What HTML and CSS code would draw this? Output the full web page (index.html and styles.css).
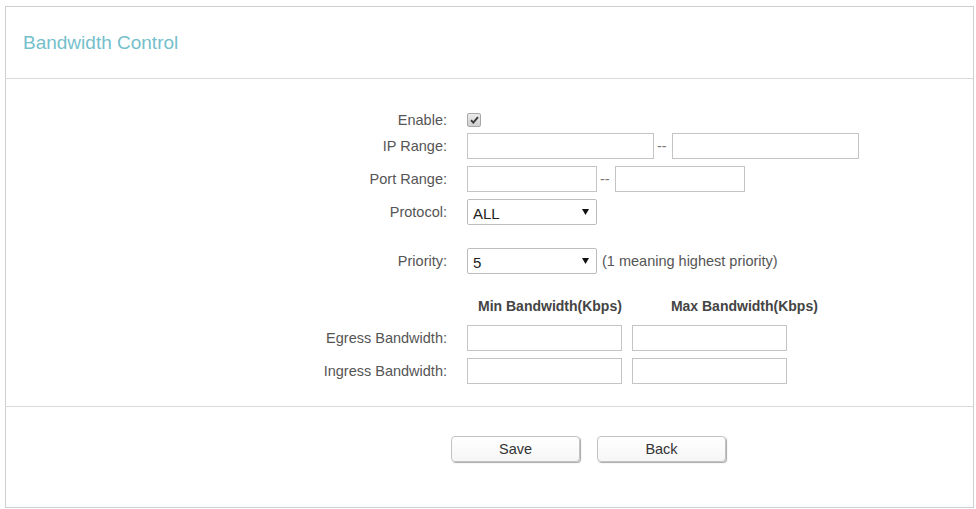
FILE: index.html
```html
<!DOCTYPE html>
<html lang="en">
<head>
    <meta charset="UTF-8">
    <meta name="viewport" content="width=device-width, initial-scale=1.0">
    <title>Bandwidth Control</title>
    <link rel="stylesheet" href="styles.css">
</head>
<body>
    <div class="panel">
        <div class="head">
            <h1 class="title">Bandwidth Control</h1>
        </div>

        <form class="form" onsubmit="return false">
            <div class="row row-check">
                <label class="lbl">Enable:</label>
                <div class="field">
                    <span class="check">
                        <svg width="9" height="8" viewBox="0 0 9 8"><path d="M1 4.2 L3.3 6.6 L8 1.2" fill="none" stroke="#3a3a3a" stroke-width="1.9"/></svg>
                    </span>
                </div>
            </div>
            <div class="row">
                <label class="lbl">IP Range:</label>
                <div class="field">
                    <input class="txt txt-ip" type="text">
                    <span class="dash">--</span>
                    <input class="txt txt-ip" type="text">
                </div>
            </div>
            <div class="row">
                <label class="lbl">Port Range:</label>
                <div class="field">
                    <input class="txt txt-port" type="text">
                    <span class="dash">--</span>
                    <input class="txt txt-port" type="text">
                </div>
            </div>
            <div class="row">
                <label class="lbl">Protocol:</label>
                <div class="field">
                    <div class="select">
                        <select>
                            <option>ALL</option>
                            <option>TCP</option>
                            <option>UDP</option>
                        </select>
                        <svg class="arrow" width="7" height="6" viewBox="0 0 7 6"><path d="M0 0 H7 L3.5 6 Z" fill="#111"/></svg>
                    </div>
                </div>
            </div>
            <div class="row row-priority">
                <label class="lbl">Priority:</label>
                <div class="field">
                    <div class="select">
                        <select>
                            <option>1</option><option>2</option><option>3</option><option>4</option>
                            <option selected>5</option><option>6</option><option>7</option><option>8</option>
                        </select>
                        <svg class="arrow" width="7" height="6" viewBox="0 0 7 6"><path d="M0 0 H7 L3.5 6 Z" fill="#111"/></svg>
                    </div>
                    <span class="hint">(1 meaning highest priority)</span>
                </div>
            </div>
            <div class="row row-heads">
                <span></span>
                <div class="heads">
                    <span class="head-min">Min Bandwidth(Kbps)</span>
                    <span class="head-max">Max Bandwidth(Kbps)</span>
                </div>
            </div>
            <div class="row">
                <label class="lbl">Egress Bandwidth:</label>
                <div class="field bw">
                    <input class="txt txt-bw" type="text">
                    <input class="txt txt-bw" type="text">
                </div>
            </div>
            <div class="row">
                <label class="lbl">Ingress Bandwidth:</label>
                <div class="field bw">
                    <input class="txt txt-bw" type="text">
                    <input class="txt txt-bw" type="text">
                </div>
            </div>
        </form>

        <div class="foot">
            <button class="btn" type="button">Save</button>
            <button class="btn" type="button">Back</button>
        </div>
    </div>
</body>
</html>
```

FILE: styles.css
```css
body {
    margin: 0;
    background: #fff;
    font-family: "Liberation Sans", Arial, sans-serif;
    font-size: 14.5px;
    color: #555;
}
.panel {
    box-sizing: border-box;
    width: 969px;
    height: 502px;
    margin: 6px 0 0 5px;
    border: 1px solid #cfcfcf;
    display: flex;
    flex-direction: column;
}
.head {
    height: 71px;
    border-bottom: 1px solid #d9d9d9;
    display: flex;
    align-items: center;
    padding-left: 17px;
}
.title {
    margin: 0;
    font-size: 19px;
    font-weight: normal;
    color: #74c0cb;
}
.form {
    display: flex;
    flex-direction: column;
    padding: 31px 0 22px;
    margin: 0;
}
.row {
    display: grid;
    grid-template-columns: 441px auto;
    column-gap: 20px;
    align-items: center;
    height: 26px;
    margin-bottom: 7px;
}
.row:last-child {
    margin-bottom: 0;
}
.row-check {
    height: 20px;
    margin-bottom: 3px;
}
.row-priority {
    margin-top: 16px;
}
.row-heads {
    height: 20px;
    margin-top: 15px;
    margin-bottom: 9px;
}
.lbl {
    text-align: right;
    white-space: nowrap;
}
.field {
    display: flex;
    align-items: center;
}
.check {
    box-sizing: border-box;
    width: 14px;
    height: 14px;
    border: 1px solid #a8a8a8;
    border-radius: 2px;
    background: linear-gradient(#ececec, #cfcfcf);
    display: flex;
    align-items: center;
    justify-content: center;
}
.txt {
    box-sizing: border-box;
    height: 26px;
    margin: 0;
    padding: 0 6px;
    border: 1px solid #c4c4c4;
    border-radius: 0;
    font: inherit;
    color: #333;
    outline: none;
}
.txt-ip {
    width: 187px;
}
.txt-port {
    width: 130px;
}
.txt-bw {
    width: 155px;
}
.bw {
    gap: 10px;
}
.dash {
    margin: 0 5px 0 3px;
    color: #777;
}
.select {
    position: relative;
    width: 130px;
    height: 26px;
}
.select select {
    box-sizing: border-box;
    width: 100%;
    height: 100%;
    margin: 0;
    padding: 2px 0 0 5px;
    border: 1px solid #bdbdbd;
    border-radius: 2px;
    background: #fff;
    -webkit-appearance: none;
    appearance: none;
    font-family: inherit;
    font-size: 15px;
    color: #222;
    outline: none;
}
.arrow {
    position: absolute;
    right: 8px;
    top: 10px;
    pointer-events: none;
}
.hint {
    margin-left: 5px;
    white-space: nowrap;
}
.heads {
    display: flex;
    font-size: 14px;
    font-weight: bold;
    color: #444;
    white-space: nowrap;
}
.head-min {
    padding-left: 11px;
}
.head-max {
    padding-left: 49px;
}
.foot {
    flex: 1;
    border-top: 1px solid #d9d9d9;
    display: flex;
    align-items: flex-start;
    gap: 17px;
    padding: 29px 0 0 445px;
}
.btn {
    box-sizing: border-box;
    width: 129px;
    height: 26px;
    margin: 0;
    border: 1px solid #c2c2c2;
    border-radius: 4px;
    background: linear-gradient(#fff, #f6f6f6);
    box-shadow: 1px 1px 1px #a9a9a9;
    font-family: inherit;
    font-size: 14.5px;
    color: #333;
    cursor: pointer;
}
```
